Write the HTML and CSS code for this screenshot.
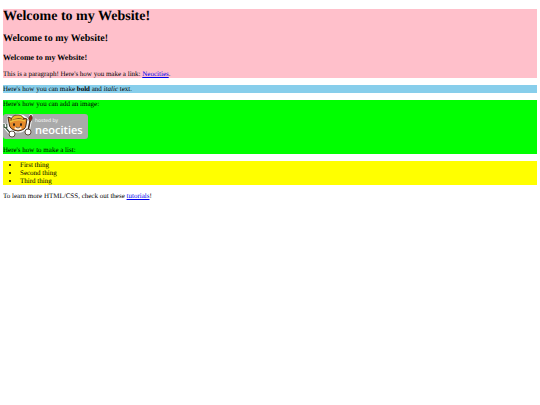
FILE: index.html
```html
<!DOCTYPE html>
<html lang="en">
<head>
    <meta charset="UTF-8">
    <meta name="viewport" content="width=device-width, initial-scale=1.0">
    <title>My Website</title>
    <link rel="stylesheet" href="styles.css">
</head>
<body>
    <div class="pink">
        <h1>Welcome to my Website!</h1>
        <h2>Welcome to my Website!</h2>
        <h3>Welcome to my Website!</h3>
        <p>This is a paragraph! Here's how you make a link: <a href="https://neocities.org">Neocities</a>.</p>
    </div>

    <p class="blue">Here's how you can make <strong>bold</strong> and <em>italic</em> text.</p>

    <div class="green">
        <p>Here's how you can add an image:</p>
        <svg class="badge" viewBox="0 0 85 25" role="img" aria-label="hosted by neocities">
            <rect width="85" height="25" rx="3" fill="#aaa"/>
            <!-- wrench -->
            <path d="M1 11 L3 14 L8 20" fill="none" stroke="#fff" stroke-width="3.5" stroke-linecap="round"/>
            <path d="M1 10 V13 L3 14 L8 20 M4 10 V13 L3 14" fill="none" stroke="#35533a" stroke-width="1.3"/>
            <!-- brush -->
            <path d="M28 2 L25 17" stroke="#fff" stroke-width="3.5" stroke-linecap="round"/>
            <path d="M27 7 L25 17" stroke="#3a2a20" stroke-width="1.5"/>
            <path d="M28 1 Q24 4 27 8 Q31 4 28 1Z" fill="#8c2d1c" stroke="#3a2a20" stroke-width=".7"/>
            <!-- cat -->
            <path d="M5 2 L10 3 Q15 -1 21 2 L25 5 L24 11 Q24 16 18 18 L10 18 Q4 15 5 10Z" fill="#fff" stroke="#fff" stroke-linejoin="round"/>
            <path d="M6 9 L5 3 L10 5 L20 4 L24 5 L23 11 Q23 16 15 17 Q6 16 6 9Z" fill="#e58a2c" stroke="#3d2817" stroke-width="1"/>
            <path d="M8 7 Q8 1 15 1 Q20 1 21 6 Q15 3 8 7Z" fill="#efb832" stroke="#4a321b" stroke-width=".8"/>
            <path d="M7 8 Q14 4 22 7" fill="none" stroke="#f0c040" stroke-width="1.5"/>
            <path d="M11 14 Q15 12 19 14 Q18 16 15 16 Q12 16 11 14Z" fill="#fff3df"/>
            <ellipse cx="11" cy="10.5" rx="1" ry="1.5" fill="#2b2118"/>
            <ellipse cx="18" cy="10.5" rx="1" ry="1.5" fill="#2b2118"/>
            <path d="M13 13 Q15 15 17 13" fill="none" stroke="#4a321b" stroke-width=".8"/>
            <circle cx="9" cy="20" r="3" fill="#fff" stroke="#3d2817" stroke-width=".8"/>
            <circle cx="25" cy="18" r="3" fill="#fff" stroke="#3d2817" stroke-width=".8"/>
            <text class="badge-small" x="32" y="8">hosted by</text>
            <text class="badge-name" x="32" y="20">neocities</text>
        </svg>
        <p>Here's how to make a list:</p>
    </div>

    <ul class="yellow">
        <li>First thing</li>
        <li>Second thing</li>
        <li>Third thing</li>
    </ul>

    <p>To learn more HTML/CSS, check out these <a href="https://neocities.org/tutorials">tutorials</a>!</p>
</body>
</html>
```
FILE: styles.css
```css
body {
    margin: 9px 3px;
    font-family: "Liberation Serif", "Times New Roman", serif;
    font-size: 7px;
    line-height: 8px;
    color: #000;
    background-color: #fff;
    text-rendering: geometricPrecision;
}
h1 {
    margin: 0 0 9px;
    font-size: 14px;
    line-height: 15px;
}
h2 {
    margin: 0 0 8px;
    font-size: 10px;
    line-height: 12px;
}
h3 {
    margin: 0 0 8px;
    font-size: 8px;
    line-height: 9px;
}
p {
    margin: 7px 0;
}
a {
    color: #0000ee;
}
.pink {
    background-color: pink;
}
.blue {
    background-color: skyblue;
}
.green {
    background-color: lime;
}
.yellow {
    margin: 7px 0;
    padding-left: 17px;
    background-color: yellow;
}
.pink p,
.green p {
    margin: 0;
}
.badge {
    display: block;
    width: 85px;
    height: 25px;
    margin: 6px 0 7px;
}
.badge text {
    font-family: "Open Sans", "Noto Sans", sans-serif;
    fill: #fff;
}
.badge-small {
    font-size: 5px;
}
.badge-name {
    font-size: 11px;
    font-weight: 600;
}
```
